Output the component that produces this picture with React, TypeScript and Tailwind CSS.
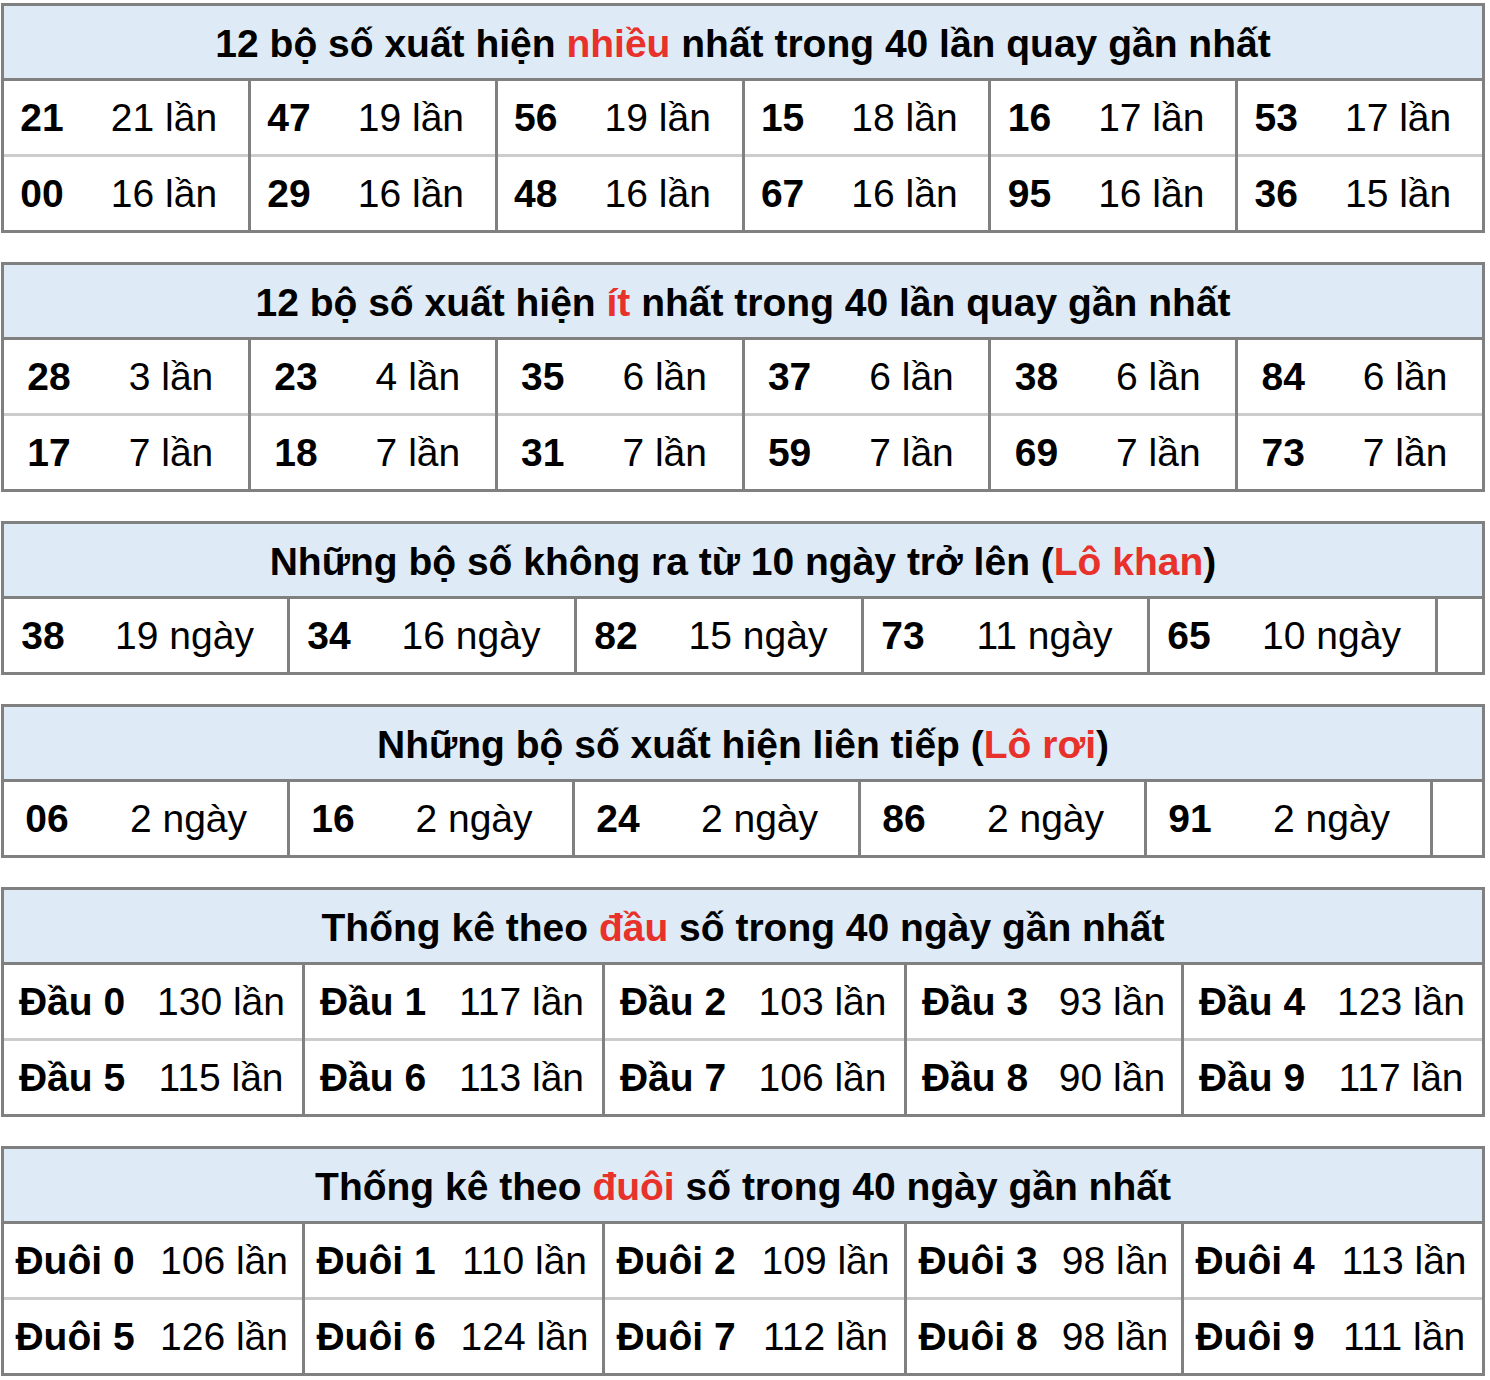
import React from 'react';

type Cell = [string, string];

interface StatTableProps {
  title: React.ReactNode;
  cols: string;
  numW: string;
  rows: Cell[][];
  extra?: boolean;
  first?: boolean;
}

const Red = ({ children }: { children: React.ReactNode }) => (
  <span className="text-[#e8312a]">{children}</span>
);

const StatTable: React.FC<StatTableProps> = ({ title, cols, numW, rows, extra, first }) => {
  // columns hold the gray vertical lines, so they sit over the light row lines
  const nCols = rows[0].length;
  const colIdx = Array.from({ length: nCols }, (_, i) => i);

  return (
    <div className={`w-[1484px] ml-[1px] border-[3px] border-[#808080] ${first ? 'mt-[3px]' : 'mt-[29px]'}`}>
      <div className="h-[75px] pt-[3px] bg-[#deeaf6] border-b-[3px] border-[#808080] flex items-center justify-center font-bold text-[39px] text-black">
        <span>{title}</span>
      </div>
      <div className={`grid ${cols}`}>
        {colIdx.map((c) => (
          <div key={c} className={c > 0 ? 'border-l-[3px] border-[#808080]' : ''}>
            {rows.map((row, r) => (
              <div
                key={r}
                className={`flex items-center ${r > 0 ? 'h-[76px] border-t-[3px] border-[#cccccc]' : 'h-[73px]'}`}
              >
                <div className={`${numW} shrink-0 text-center font-bold`}>{row[c][0]}</div>
                <div className="flex-1 text-center">{row[c][1]}</div>
              </div>
            ))}
          </div>
        ))}
        {extra && (
          <div className="border-l-[3px] border-[#808080]">
            {rows.map((_, r) => (
              <div key={r} className={r > 0 ? 'h-[76px] border-t-[3px] border-[#cccccc]' : 'h-[73px]'} />
            ))}
          </div>
        )}
      </div>
    </div>
  );
};

const mostRows: Cell[][] = [
  [['21', '21 lần'], ['47', '19 lần'], ['56', '19 lần'], ['15', '18 lần'], ['16', '17 lần'], ['53', '17 lần']],
  [['00', '16 lần'], ['29', '16 lần'], ['48', '16 lần'], ['67', '16 lần'], ['95', '16 lần'], ['36', '15 lần']],
];

const leastRows: Cell[][] = [
  [['28', '3 lần'], ['23', '4 lần'], ['35', '6 lần'], ['37', '6 lần'], ['38', '6 lần'], ['84', '6 lần']],
  [['17', '7 lần'], ['18', '7 lần'], ['31', '7 lần'], ['59', '7 lần'], ['69', '7 lần'], ['73', '7 lần']],
];

const khanRows: Cell[][] = [
  [['38', '19 ngày'], ['34', '16 ngày'], ['82', '15 ngày'], ['73', '11 ngày'], ['65', '10 ngày']],
];

const roiRows: Cell[][] = [
  [['06', '2 ngày'], ['16', '2 ngày'], ['24', '2 ngày'], ['86', '2 ngày'], ['91', '2 ngày']],
];

const dauRows: Cell[][] = [
  [['Đầu 0', '130 lần'], ['Đầu 1', '117 lần'], ['Đầu 2', '103 lần'], ['Đầu 3', '93 lần'], ['Đầu 4', '123 lần']],
  [['Đầu 5', '115 lần'], ['Đầu 6', '113 lần'], ['Đầu 7', '106 lần'], ['Đầu 8', '90 lần'], ['Đầu 9', '117 lần']],
];

const duoiRows: Cell[][] = [
  [['Đuôi 0', '106 lần'], ['Đuôi 1', '110 lần'], ['Đuôi 2', '109 lần'], ['Đuôi 3', '98 lần'], ['Đuôi 4', '113 lần']],
  [['Đuôi 5', '126 lần'], ['Đuôi 6', '124 lần'], ['Đuôi 7', '112 lần'], ['Đuôi 8', '98 lần'], ['Đuôi 9', '111 lần']],
];

export default function App() {
  return (
    <div className="bg-white min-h-[1380px] text-black text-[39px] leading-none font-['Liberation_Sans',Arial,sans-serif]">
      <StatTable
        first
        title={<>12 bộ số xuất hiện <Red>nhiều</Red> nhất trong 40 lần quay gần nhất</>}
        cols="grid-cols-[244px_repeat(5,1fr)]"
        numW="w-[76px]"
        rows={mostRows}
      />
      <StatTable
        title={<>12 bộ số xuất hiện <Red>ít</Red> nhất trong 40 lần quay gần nhất</>}
        cols="grid-cols-[244px_repeat(5,1fr)]"
        numW="w-[90px]"
        rows={leastRows}
      />
      <StatTable
        title={<>Những bộ số không ra từ 10 ngày trở lên (<Red>Lô khan</Red>)</>}
        cols="grid-cols-[283px_287px_287px_286px_288px_1fr]"
        numW="w-[78px]"
        rows={khanRows}
        extra
      />
      <StatTable
        title={<>Những bộ số xuất hiện liên tiếp (<Red>Lô rơi</Red>)</>}
        cols="grid-cols-[283px_285px_286px_286px_286px_1fr]"
        numW="w-[86px]"
        rows={roiRows}
        extra
      />
      <StatTable
        title={<>Thống kê theo <Red>đầu</Red> số trong 40 ngày gần nhất</>}
        cols="grid-cols-[298px_300px_302px_277px_1fr]"
        numW="w-[136px]"
        rows={dauRows}
      />
      <StatTable
        title={<>Thống kê theo <Red>đuôi</Red> số trong 40 ngày gần nhất</>}
        cols="grid-cols-[298px_300px_302px_277px_1fr]"
        numW="w-[142px]"
        rows={duoiRows}
      />
    </div>
  );
}
